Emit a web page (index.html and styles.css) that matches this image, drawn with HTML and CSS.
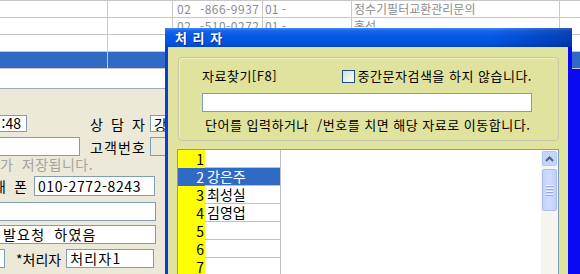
FILE: index.html
```html
<!DOCTYPE html>
<html lang="ko">
<head>
  <meta charset="UTF-8">
  <title>처리자</title>
  <link rel="stylesheet" href="styles.css">
</head>
<body>
  <div class="screen">
    <div class="list">
      <div class="list-row">
        <div class="cell c1"></div>
        <div class="cell c2"></div>
        <div class="cell c3"><span class="area">02</span>-866-9937</div>
        <div class="cell c4">01 -</div>
        <div class="cell c5">정수기필터교환관리문의</div>
        <div class="cell c6"></div>
      </div>
      <div class="list-row">
        <div class="cell c1"></div>
        <div class="cell c2"></div>
        <div class="cell c3"><span class="area">02</span>-510-0272</div>
        <div class="cell c4">01 -</div>
        <div class="cell c5">홍석</div>
        <div class="cell c6"></div>
      </div>
      <div class="list-row">
        <div class="cell c1"></div>
        <div class="cell c2"></div>
        <div class="cell c3"></div>
        <div class="cell c4"></div>
        <div class="cell c5"></div>
        <div class="cell c6"></div>
      </div>
      <div class="list-row selected">
        <div class="cell c1"></div>
        <div class="cell c2"></div>
        <div class="cell c3"></div>
        <div class="cell c4"></div>
        <div class="cell c5"></div>
        <div class="cell c6"></div>
      </div>
    </div>

    <div class="lower">
      <div class="lower-main">
        <div class="blank-row"></div>
        <div class="form">
          <div class="form-row row-a">
            <div class="field time">:48</div>
            <div class="label spread w55 gap-a"><span>상</span><span>담</span><span>자</span></div>
            <div class="field agent">강은주</div>
          </div>
          <div class="form-row row-b">
            <div class="field cust"></div>
            <div class="label spread w55 gap-b"><span>고</span><span>객</span><span>번</span><span>호</span></div>
            <div class="field agent disabled"></div>
          </div>
          <div class="form-row row-c">
            <div class="note">가 저장됩니다.</div>
          </div>
          <div class="form-row row-d">
            <div class="label spread w55 phone-label"><span>휴</span><span>대</span><span>폰</span></div>
            <div class="field phone">010-2772-8243</div>
          </div>
          <div class="form-row row-e">
            <div class="field wide"></div>
          </div>
          <div class="form-row row-f">
            <div class="field wide memo">발요청 하였음</div>
          </div>
          <div class="form-row row-g">
            <div class="field stub"></div>
            <div class="label handler-label">*처리자</div>
            <div class="field handler">처리자1</div>
          </div>
        </div>
      </div>
      <div class="edge"></div>
    </div>

    <div class="dialog">
      <div class="dialog-title">처 리 자</div>
      <div class="dialog-body">
        <div class="search-box">
          <div class="search-head">
            <span>자료찾기[F8]</span>
            <span class="check"><span class="check-box"></span>중간문자검색을 하지 않습니다.</span>
          </div>
          <div class="search-input"></div>
          <div class="search-help">단어를 입력하거나 &nbsp;/번호를 치면 해당 자료로 이동합니다.</div>
        </div>

        <div class="picker">
          <div class="picker-rows">
            <div class="p-row"><span class="p-num">1</span><span class="p-name"></span></div>
            <div class="p-row active"><span class="p-num">2</span><span class="p-name">강은주</span></div>
            <div class="p-row"><span class="p-num">3</span><span class="p-name">최성실</span></div>
            <div class="p-row"><span class="p-num">4</span><span class="p-name">김영업</span></div>
            <div class="p-row"><span class="p-num">5</span><span class="p-name"></span></div>
            <div class="p-row"><span class="p-num">6</span><span class="p-name"></span></div>
            <div class="p-row"><span class="p-num">7</span><span class="p-name"></span></div>
          </div>
          <div class="scrollbar">
            <div class="scroll-btn">
              <svg width="9" height="6" viewBox="0 0 9 6"><path d="M1 5 L4.5 1.5 L8 5" fill="none" stroke="#4d6185" stroke-width="2"/></svg>
            </div>
            <div class="scroll-thumb">
              <span></span><span></span><span></span><span></span>
            </div>
          </div>
        </div>
      </div>
    </div>
  </div>
</body>
</html>
```

FILE: styles.css
```css
body {
  margin: 0;
  background-color: #ece9d8;
  font-family: "Noto Sans CJK KR", sans-serif;
}

.screen {
  position: relative;
  width: 580px;
  height: 274px;
  overflow: hidden;
}

/* background list */
.list {
  background: #fff;
  border-top: 1px solid #c8c8c8;
}

.list-row {
  display: flex;
  height: 17px;
  box-sizing: border-box;
  border-bottom: 1px solid #c8c8c8;
}

.list-row.selected {
  background-color: #316ac5;
}

.cell {
  box-sizing: border-box;
  border-right: 1px solid #c8c8c8;
  font-size: 12px;
  line-height: 16px;
  color: #8c8c8c;
  white-space: nowrap;
  overflow: hidden;
}

.c1 { width: 108px; }
.c2 { width: 65px; }
.c3 { width: 90px; padding-left: 4px; letter-spacing: 0.5px; }
.c4 { width: 89px; padding-left: 2px; }
.c5 { width: 208px; padding-left: 2px; }
.c6 { flex: 1; border-right: none; }

.area {
  display: inline-block;
  width: 23px;
}

/* background form */
.lower {
  display: flex;
  height: 205px;
}

.lower-main {
  flex: 1;
}

.blank-row {
  height: 20px;
  box-sizing: border-box;
  background: #fff;
  border-bottom: 1px solid #9aaabf;
}

.edge {
  width: 8px;
  background-color: #0a0af2;
}

.form {
  padding-top: 26px;
  font-size: 14px;
  word-spacing: 4px;
}

.form-row {
  display: flex;
  align-items: center;
}

.row-a { height: 17px; }
.row-b { height: 19px; margin-top: 5px; }
.row-c { height: 14px; margin-top: 1px; }
.row-d { height: 20px; margin-top: 5px; }
.row-e { height: 19px; margin-top: 6px; }
.row-f { height: 19px; margin-top: 4px; }
.row-g { height: 19px; margin-top: 5px; }

.field {
  height: 100%;
  box-sizing: border-box;
  border: 1px solid #7f9db9;
  background: #fff;
  padding: 0 3px;
  line-height: 17px;
  letter-spacing: 1.2px;
  white-space: nowrap;
  overflow: hidden;
  color: #000;
}

.field.disabled {
  background-color: #ece9d8;
}

.label {
  color: #000;
  line-height: 16px;
}

.spread {
  display: flex;
  justify-content: space-between;
}

.w55 { width: 55px; }

.time {
  width: 80px;
  margin-left: -53px;
  text-align: right;
  padding-right: 5px;
  line-height: 15px;
  letter-spacing: 0;
}

.gap-a { margin-left: 63px; }
.gap-b { margin-left: 10px; }

.agent {
  width: 60px;
  margin-left: 5px;
}

.cust {
  width: 140px;
  margin-left: -60px;
}

.note {
  color: #a3a3a3;
  line-height: 14px;
  letter-spacing: 0.5px;
}

.phone-label { margin-left: -28px; }

.phone {
  width: 121px;
  margin-left: 7px;
  line-height: 18px;
  letter-spacing: 0.6px;
}

.wide {
  width: 216px;
  margin-left: -60px;
}

.memo { padding-left: 62px; }

.stub {
  width: 65px;
  margin-left: -60px;
}

.handler-label { margin-left: 11px; }

.handler {
  width: 88px;
  margin-left: 5px;
}

/* dialog window */
.dialog {
  position: absolute;
  left: 165px;
  top: 28px;
  width: 407px;
  height: 260px;
  display: flex;
  flex-direction: column;
  font-size: 13px;
}

.dialog-title {
  height: 19px;
  padding-left: 10px;
  line-height: 19px;
  color: #fff;
  font-weight: bold;
  letter-spacing: 1px;
  text-shadow: 1px 1px 0 #0a2a8a;
  background:
    linear-gradient(to right, rgba(0, 0, 60, 0) 80%, rgba(0, 0, 60, 0.3)),
    linear-gradient(#3b8af6 0, #1763ec 3px, #0759e6 8px, #0054e0 14px, #0046cc 19px);
}

.dialog-body {
  flex: 1;
  background-color: #e0e39e;
  border-left: 3px solid #0a3bdc;
  border-right: 4px solid #0a0af2;
}

.search-box {
  width: 381px;
  height: 84px;
  margin: 10px 0 0 10px;
  box-sizing: border-box;
  padding: 10px 26px 0 23px;
  border: 1px solid #c6c8ad;
  border-radius: 4px;
  box-shadow: inset 1px 1px 0 #eef0c4;
  letter-spacing: 0.5px;
}

.search-head {
  display: flex;
  justify-content: space-between;
  line-height: 16px;
}

.check {
  display: flex;
  align-items: center;
}

.check-box {
  width: 11px;
  height: 11px;
  margin-right: 3px;
  border: 1px solid #1c5180;
  background: linear-gradient(135deg, #dcdcd6, #fbfbf9);
}

.search-input {
  height: 19px;
  margin-top: 9px;
  box-sizing: border-box;
  border: 1px solid #7f9db9;
  background: #fff;
}

.search-help {
  margin-top: 5px;
  padding-left: 3px;
  line-height: 16px;
}

.picker {
  display: flex;
  width: 382px;
  height: 140px;
  margin: 8px 0 0 9px;
  box-sizing: border-box;
  border: 1px solid #7f9db9;
  background: #fff;
}

.picker-rows {
  flex: 1;
}

.p-row {
  display: flex;
  height: 18px;
  font-size: 14px;
  line-height: 18px;
}

.p-num {
  display: flex;
  justify-content: flex-end;
  width: 27px;
  flex-shrink: 0;
  padding-right: 1px;
  box-sizing: border-box;
  background: #ffff00;
}

.p-name {
  display: block;
  width: 76px;
  flex-shrink: 0;
  box-sizing: border-box;
  padding-left: 2px;
  border-right: 1px solid #c0c0c0;
  border-bottom: 1px solid #c0c0c0;
  line-height: 17px;
}

.p-row.active .p-num,
.p-row.active .p-name {
  background: #316ac5;
  color: #fff;
}

.scrollbar {
  width: 17px;
  padding: 1px 1px 0 1px;
  box-sizing: border-box;
  background: #f5f4ee;
}

.scroll-btn {
  height: 15px;
  display: flex;
  align-items: center;
  justify-content: center;
  border: 1px solid #b4c8f5;
  border-radius: 2px;
  box-sizing: border-box;
  background: #c4d5fc;
}

.scroll-thumb {
  height: 42px;
  margin-top: 3px;
  display: flex;
  flex-direction: column;
  align-items: center;
  justify-content: center;
  gap: 1px;
  border: 1px solid #a9bdef;
  border-radius: 2px;
  box-sizing: border-box;
  background: linear-gradient(to right, #c2d3fc, #cfdcfd, #bccefa);
}

.scroll-thumb span {
  width: 7px;
  height: 1px;
  background: #eef3ff;
  border-bottom: 1px solid #8fa9e8;
}
```
